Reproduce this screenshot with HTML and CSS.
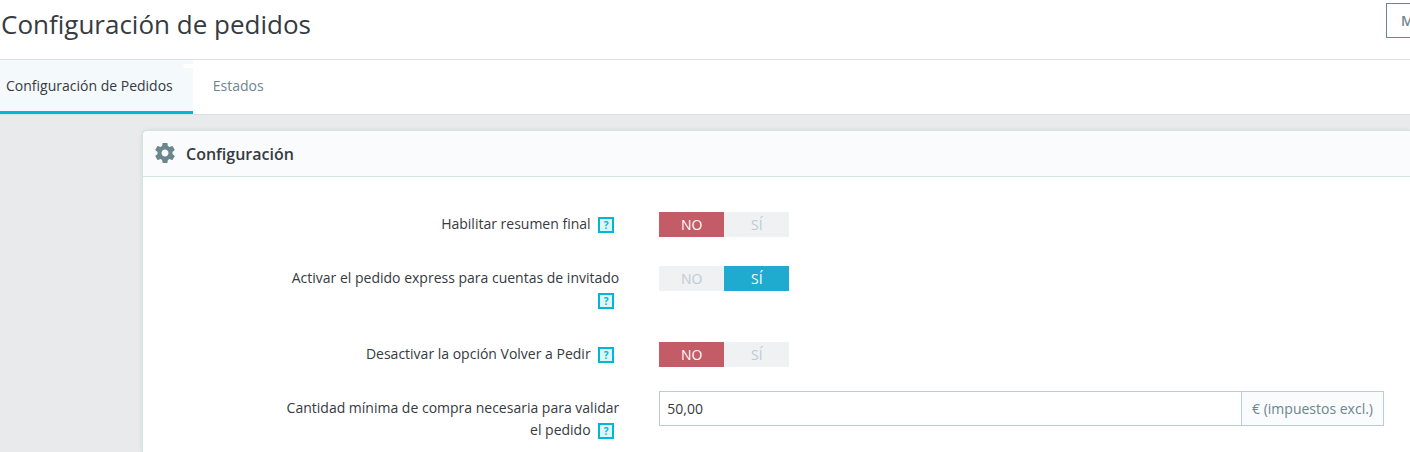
FILE: index.html
```html
<!DOCTYPE html>
<html lang="es">
<head>
    <meta charset="UTF-8">
    <meta name="viewport" content="width=device-width, initial-scale=1.0">
    <title>Configuración de pedidos</title>
    <link rel="stylesheet" href="styles.css">
</head>
<body>
    <!-- Page header -->
    <header class="page-header">
        <h1>Configuración de pedidos</h1>
        <button type="button" class="btn-outline">M</button>
    </header>

    <!-- Tabs -->
    <nav class="tabs">
        <a href="#pedidos" class="tab active">Configuración de Pedidos</a>
        <a href="#estados" class="tab">Estados</a>
    </nav>

    <main class="content">
        <form class="card" id="pedidos">
            <h2 class="card-header">
                <svg class="icon" viewBox="0 0 24 24" aria-hidden="true">
                    <path d="M19.43 12.98c.04-.32.07-.64.07-.98s-.03-.66-.07-.98l2.11-1.65c.19-.15.24-.42.12-.64l-2-3.46c-.12-.22-.39-.3-.61-.22l-2.49 1c-.52-.4-1.08-.73-1.69-.98l-.38-2.65C14.46 2.18 14.25 2 14 2h-4c-.25 0-.46.18-.49.42l-.38 2.65c-.61.25-1.17.59-1.69.98l-2.49-1c-.23-.09-.49 0-.61.22l-2 3.46c-.13.22-.07.49.12.64l2.11 1.65c-.04.32-.07.65-.07.98s.03.66.07.98l-2.11 1.65c-.19.15-.24.42-.12.64l2 3.46c.12.22.39.3.61.22l2.49-1c.52.4 1.08.73 1.69.98l.38 2.65c.03.24.24.42.49.42h4c.25 0 .46-.18.49-.42l.38-2.65c.61-.25 1.17-.59 1.69-.98l2.49 1c.23.09.49 0 .61-.22l2-3.46c.12-.22.07-.49-.12-.64l-2.11-1.65zM12 15.5c-1.93 0-3.5-1.57-3.5-3.5s1.57-3.5 3.5-3.5 3.5 1.57 3.5 3.5-1.57 3.5-3.5 3.5z"/>
                </svg>
                Configuración
            </h2>

            <div class="card-body">
                <div class="form-row" role="radiogroup" aria-labelledby="resumenLabel">
                    <div class="form-label">
                        <span id="resumenLabel">Habilitar resumen final</span>
                        <button type="button" class="help-box">?</button>
                    </div>
                    <div class="switch">
                        <input type="radio" name="resumen" id="resumenNo" checked>
                        <label for="resumenNo">NO</label>
                        <input type="radio" name="resumen" id="resumenSi">
                        <label for="resumenSi" class="yes">SÍ</label>
                    </div>
                </div>

                <div class="form-row" role="radiogroup" aria-labelledby="expressLabel">
                    <div class="form-label">
                        <span id="expressLabel">Activar el pedido express para cuentas de invitado</span>
                        <button type="button" class="help-box">?</button>
                    </div>
                    <div class="switch">
                        <input type="radio" name="express" id="expressNo">
                        <label for="expressNo">NO</label>
                        <input type="radio" name="express" id="expressSi" checked>
                        <label for="expressSi" class="yes">SÍ</label>
                    </div>
                </div>

                <div class="form-row" role="radiogroup" aria-labelledby="volverLabel">
                    <div class="form-label">
                        <span id="volverLabel">Desactivar la opción Volver a Pedir</span>
                        <button type="button" class="help-box">?</button>
                    </div>
                    <div class="switch">
                        <input type="radio" name="volver" id="volverNo" checked>
                        <label for="volverNo">NO</label>
                        <input type="radio" name="volver" id="volverSi">
                        <label for="volverSi" class="yes">SÍ</label>
                    </div>
                </div>

                <div class="form-row">
                    <div class="form-label">
                        <label for="minimo">Cantidad mínima de compra necesaria para validar el pedido</label>
                        <button type="button" class="help-box">?</button>
                    </div>
                    <div class="input-group">
                        <input type="text" id="minimo" value="50,00">
                        <span class="input-addon">€ (impuestos excl.)</span>
                    </div>
                </div>
            </div>
        </form>
    </main>
</body>
</html>
```
FILE: styles.css
```css
* {
    box-sizing: border-box;
}

body {
    margin: 0;
    min-height: 100vh;
    display: flex;
    flex-direction: column;
    overflow: hidden;
    font-family: "Open Sans", sans-serif;
    font-size: 14px;
    line-height: 21px;
    color: #363a41;
    background-color: #e9eaec;
}

button,
input {
    font-family: inherit;
}

.page-header {
    display: flex;
    justify-content: space-between;
    align-items: flex-start;
    padding: 3px 0 14px;
    background-color: white;
    border-bottom: 1px solid #dddfe0;
}

.page-header h1 {
    margin: 0;
    padding-left: 1px;
    font-size: 26px;
    font-weight: 400;
    line-height: 42px;
}

.btn-outline {
    width: 24px;
    height: 35px;
    padding: 0 0 0 14px;
    border: 1px solid #6c868e;
    border-right: none;
    background-color: white;
    color: #6c868e;
    font-size: 14px;
    font-weight: 600;
    overflow: hidden;
}

.tabs {
    display: flex;
    background-color: white;
    border-bottom: 1px solid #dddfe0;
}

.tab {
    position: relative;
    padding: 15px 20px;
    border-bottom: 3px solid transparent;
    color: #6c868e;
    text-decoration: none;
}

.tab.active {
    padding-left: 6px;
    border-bottom-color: #00b8d4;
    background-color: #f4f9fc;
    color: #363a41;
}

/* empty counter badge */
.tab.active::after {
    content: "";
    position: absolute;
    top: 4px;
    right: 0;
    width: 10px;
    height: 4px;
    border-radius: 2px 0 0 2px;
    background-color: white;
}

.content {
    flex: 1;
    display: flex;
    padding: 15px 0 0 142px;
}

.card {
    flex: 1;
    border: 1px solid #d3e3e3;
    border-right: none;
    border-bottom: none;
    border-radius: 5px 0 0 0;
    box-shadow: 0 0 4px rgba(0, 0, 0, 0.08);
    background-color: white;
}

.card-header {
    display: flex;
    align-items: center;
    gap: 9px;
    margin: 0;
    padding: 13px 10px 11px;
    border-bottom: 1px solid #d3e3e3;
    border-radius: 5px 0 0 0;
    background-color: #fafbfc;
    font-size: 16px;
    font-weight: 600;
}

.icon {
    width: 24px;
    height: 24px;
    margin-top: -3px;
    fill: #6c868e;
}

.card-body {
    display: grid;
    gap: 16px;
    padding: 28px 26px 0 0;
}

.form-row {
    display: grid;
    grid-template-columns: 23fr 35fr;
    gap: 40px;
    align-items: start;
}

.form-label {
    padding: 8px 0 8px 140px;
    line-height: 22px;
    text-align: right;
}

.help-box {
    width: 16px;
    height: 16px;
    margin: 0 5px 0 4px;
    padding: 0;
    border: 2px solid #00b8d4;
    background-color: #dff5f9;
    color: #00b8d4;
    font-size: 10px;
    font-weight: 700;
    line-height: 12px;
    vertical-align: middle;
}

.switch {
    display: flex;
    width: 130px;
    margin-top: 7px;
}

/* the radios stay focusable, the labels draw the switch */
.switch input {
    appearance: none;
    width: 0;
    height: 0;
    margin: 0;
}

.switch label {
    flex: 1;
    background-color: #eff1f2;
    color: #bbcdd2;
    line-height: 25px;
    text-align: center;
    cursor: pointer;
}

.switch input:checked + label {
    background-color: #c45c67;
    color: white;
}

.switch input:checked + .yes {
    background-color: #1eabcf;
}

.input-group {
    display: flex;
    margin-top: 2px;
    border: 1px solid #bbcdd2;
}

.input-group input {
    flex: 1;
    min-width: 0;
    height: 33px;
    padding: 0 7px;
    border: none;
    color: #363a41;
    font-size: 14px;
}

.input-addon {
    padding: 6px 10px;
    border-left: 1px solid #bbcdd2;
    background-color: #fafbfc;
    color: #6c868e;
}
```
